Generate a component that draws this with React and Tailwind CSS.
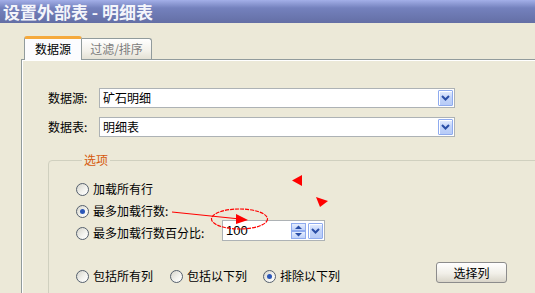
import React from 'react';

const Chevron = () => (
  <svg width="9" height="6" viewBox="0 0 9 6">
    <path d="M1 1 L4.5 4.5 L8 1" stroke="#2a4ea6" strokeWidth="2" fill="none" />
  </svg>
);

const ComboButton = () => (
  <div className="w-[15px] h-[16px] rounded-[1px] border border-[#8fabef] bg-[linear-gradient(to_bottom,#e6eefe,#c4d5fa_45%,#b7cbf7)] shadow-[inset_1px_1px_0_#fff] flex items-center justify-center">
    <Chevron />
  </div>
);

const Select = ({ value }) => (
  <div className="w-[356px] h-[20px] bg-white border border-[#adb2b5] flex items-center justify-between pl-[3px] pr-[1px]">
    <span className="leading-none">{value}</span>
    <ComboButton />
  </div>
);

const Radio = ({ checked, label, className = '' }) => (
  <div className={`flex items-center gap-[4px] ${className}`}>
    <div className="w-[13px] h-[13px] rounded-full border border-[#55606e] bg-[linear-gradient(135deg,#d6d5cc,#f4f4f0_60%,#ffffff)] flex items-center justify-center shrink-0">
      {checked && <div className="w-[5px] h-[5px] rounded-full bg-[#2b57b8]" />}
    </div>
    <span className="leading-none">{label}</span>
  </div>
);

const SpinHalf = ({ up }) => (
  <div className="w-[15px] h-[8px] border border-[#8fabef] bg-[linear-gradient(to_bottom,#e6eefe,#bfd1f9)] flex items-center justify-center">
    <svg width="7" height="4" viewBox="0 0 7 4">
      <path d={up ? 'M0 4 L3.5 0.5 L7 4Z' : 'M0 0 L3.5 3.5 L7 0Z'} fill="#2a4ea6" />
    </svg>
  </div>
);

export default function App() {
  return (
    <div className="relative w-[535px] h-[293px] overflow-hidden bg-[#ece9d8] text-[12px] text-black font-['Noto_Sans_CJK_SC','Noto_Sans',sans-serif]">
      {/* title bar */}
      <div className="h-[23px] flex items-center pl-[3px] text-[#f4f5fb] text-[17px] font-bold bg-[linear-gradient(to_bottom,#a3afe8,#7481bd_35%,#646fa5)]">
        设置外部表 - 明细表
      </div>

      <div className="pl-[21px] pt-[13px]">
        {/* tabs */}
        <div className="flex items-end h-[23px] pl-[3px]">
          <div className="relative z-10 -mb-px w-[58px] h-[24px] bg-[#fcfcfe] border-x border-[#919b9c] border-t-[3px] border-t-[#f5a93c] rounded-t-[3px] flex justify-center pt-[3px]">
            <span className="leading-[14px]">数据源</span>
          </div>
          <div className="w-[70px] h-[21px] border-t border-r border-[#919b9c] rounded-tr-[3px] bg-[linear-gradient(to_bottom,#ffffff,#f3f1ea_60%,#e4e1d5)] flex justify-center pt-[3px] text-[#7d7d7d]">
            <span className="leading-[14px]">过滤/排序</span>
          </div>
        </div>

        {/* panel */}
        <div className="w-[600px] h-[260px] border-t border-l border-[#919b9c] shadow-[inset_1px_1px_0_#ffffff] pl-[26px] pt-[28px]">
          <div className="flex items-center h-[20px]">
            <span className="w-[51px]">数据源:</span>
            <Select value="矿石明细" />
          </div>
          <div className="flex items-center h-[20px] mt-[9px]">
            <span className="w-[51px]">数据表:</span>
            <Select value="明细表" />
          </div>

          <fieldset className="mt-[16px] w-[540px] h-[200px] rounded-[4px] border border-[#d0d0bf] pl-[27px]">
            <legend className="ml-[6px] px-[2px] leading-[14px] text-[#d65a0c]">选项</legend>
            <div className="pt-[11px]">
              <div className="h-[22px] flex items-center">
                <Radio label="加载所有行" />
              </div>
              <div className="h-[22px] flex items-center">
                <Radio checked label="最多加载行数:" />
              </div>
              <div className="h-[22px] flex items-center">
                <Radio label="最多加载行数百分比:" className="w-[146px]" />
                <div className="w-[103px] h-[21px] mb-[5px] bg-white border border-[#adb2b5] flex items-center justify-between pl-[3px] pr-[1px]">
                  <span className="leading-none font-['Liberation_Sans',sans-serif] text-[13px]">100</span>
                  <div className="flex gap-[2px] items-center">
                    <div className="flex flex-col">
                      <SpinHalf up />
                      <SpinHalf />
                    </div>
                    <ComboButton />
                  </div>
                </div>
              </div>
              <div className="h-[22px] mt-[21px] flex items-center">
                <Radio label="包括所有列" className="w-[94px]" />
                <Radio label="包括以下列" className="w-[93px]" />
                <Radio checked label="排除以下列" className="w-[173px]" />
                <button className="w-[71px] h-[21px] mb-[7px] rounded-[3px] border border-[#8c8c8c] bg-[linear-gradient(to_bottom,#ffffff,#f1efe8_55%,#d9d5c9)] leading-none">
                  选择列
                </button>
              </div>
            </div>
          </fieldset>
        </div>
      </div>

      {/* red annotations drawn over the screenshot */}
      <svg className="absolute inset-0 pointer-events-none" width="535" height="293">
        <line x1="172" y1="212" x2="240" y2="219" stroke="#ff0000" strokeWidth="1.2" />
        <polygon points="236,214 248,220 236,224" fill="#ff0000" />
        <ellipse cx="239.5" cy="219" rx="28" ry="10" fill="none" stroke="#ff0000" strokeWidth="1.2" strokeDasharray="4 1" />
        <polygon points="292,180.5 302,175 302,186" fill="#ff0000" />
        <polygon points="316,197 328,201 320,207" fill="#ff0000" />
      </svg>
    </div>
  );
}
